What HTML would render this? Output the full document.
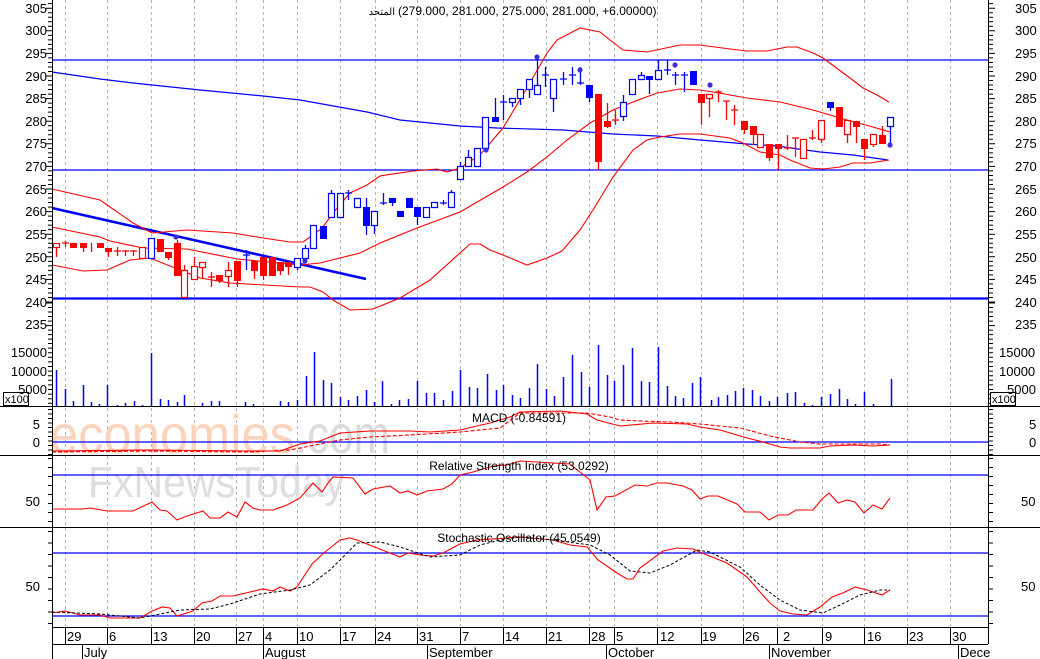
<!DOCTYPE html>
<html><head><meta charset="utf-8"><style>
html,body{margin:0;padding:0;background:#fff;}
svg{display:block;font-family:"Liberation Sans","Noto Sans CJK SC",sans-serif;}
</style></head><body>
<svg width="1040" height="659" viewBox="0 0 1040 659" xmlns="http://www.w3.org/2000/svg">
<rect width="1040" height="659" fill="#fff"/>
<path stroke="#b4b4b4" stroke-dasharray="3,3" fill="none" d="M65.5 0V627M107.5 0V627M151.5 0V627M194.5 0V627M236.5 0V627M263.5 0V627M297.5 0V627M340.5 0V627M375.5 0V627M417.5 0V627M460.5 0V627M503.5 0V627M546.5 0V627M589.5 0V627M614.5 0V627M657.5 0V627M701.5 0V627M743.5 0V627M777.5 0V627M822.5 0V627M864.5 0V627M907.5 0V627M950.5 0V627"/>
<text x="50" y="453" font-size="54" fill="#fcd3bd" textLength="245" lengthAdjust="spacingAndGlyphs">economies</text>
<text x="295" y="453" font-size="54" fill="#dcdcdc" textLength="95" lengthAdjust="spacingAndGlyphs">.com</text>
<text x="88" y="497" font-size="44" fill="#dedede" textLength="257" lengthAdjust="spacingAndGlyphs">FxNewsToday</text>
<g stroke="#0000ff" fill="none">
<line x1="52" y1="60" x2="988" y2="60" stroke-width="1.3"/>
<line x1="52" y1="170" x2="988" y2="170" stroke-width="1.3"/>
<line x1="52" y1="298.5" x2="988" y2="298.5" stroke-width="2.2"/>
<polyline stroke-width="1.2" points="52,72 100,79 133,83 200,90 263,96 300,100 367,112 400,120 460,126 497,128 563,130 613,134 657,136 700,140 747,144 777,146 820,152 853,155 888,160"/>
<line x1="52" y1="208" x2="366" y2="279" stroke-width="2.6"/>
<line x1="52" y1="442" x2="988" y2="442" stroke-width="1.2"/>
<line x1="52" y1="475" x2="988" y2="475" stroke-width="1.2"/>
<line x1="52" y1="553" x2="988" y2="553" stroke-width="1.2"/>
<line x1="52" y1="616" x2="988" y2="616" stroke-width="1.2"/>
</g>
<g stroke="#ff0000" fill="none" stroke-width="1.1">
<polyline points="52,189 100,200 133,223 152,233 187,230 233,233 263,238 290,242 303,242 313,235 323,227 333,213 350,193 367,185 380,176 413,171 437,169 447,172 460,168 480,155 503,128 527,88 547,53 557,40 580,28 600,32 610,40 623,50 647,52 680,45 700,45 730,49 747,51 767,51 787,47 797,47 813,53 823,58 850,78 863,88 877,95 889,102"/>
<polyline points="52,227 100,237 110,241 143,248 187,249 237,259 300,265 320,263 360,253 380,243 417,228 460,212 503,187 527,172 547,157 567,140 590,123 613,110 633,102 657,93 680,89 700,90 713,92 747,98 780,102 813,110 847,120 873,127 890,132"/>
<polyline points="52,265 83,271 107,270 130,260 150,258 175,268 200,278 230,283 300,287 310,287 323,292 333,300 350,310 373,309 400,298 430,280 470,244 480,244 490,250 503,255 527,265 547,258 562,251 580,230 593,210 613,177 633,150 647,140 660,137 680,134 700,134 730,138 743,143 760,152 780,155 790,160 810,168 823,169 840,167 853,163 870,163 889,160"/>
</g>
<path stroke="#ff0000" stroke-width="1.3" fill="none" d="M56.5 243V257M65.5 241V247M73.5 243V247M83.5 243V252M91.5 243V252M108.5 248V257M117.5 247V256M125.5 250V256M133.5 250V256M142.5 247V258M168.5 252V260M177.5 240V275M184.5 265V297M194.5 257V279M202.5 262V278M211.5 272V287M219.5 275V283M228.5 262V287M237.5 261V287M254.5 261V279M263.5 257V280M272.5 257V275M280.5 262V275M288.5 262V275M598.5 94V170M607.5 103V128M615.5 110V125M701.5 94V125M709.5 94V117M718.5 90V102M726.5 101V120M734.5 105V125M744.5 121V134M753.5 126V145M760.5 134V148M769.5 144V161M778.5 144V170M787.5 135V150M795.5 138V157M803.5 139V158M812.5 130V140M821.5 120V143M839.5 107V126M847.5 120V143M856.5 121V143M864.5 139V160M873.5 134V147M882.5 126V143M62 243h7M114 251h7M122 251h7M130 251h7M208 277h7M612 120h7M715 92h7M723 101h7M731 110h7M784 148h7M792 138h7M809 138h7"/>
<path fill="#ff0000" stroke="#ff0000" stroke-width="1" d="M70.5 243.5h6v4h-6zM80.5 243.5h6v4h-6zM97.5 243.5h6v4h-6zM105.5 248.5h6v3h-6zM157.5 239.5h6v12h-6zM165.5 252.5h6v5h-6zM174.5 243.5h6v32h-6zM216.5 275.5h6v5h-6zM234.5 261.5h6v19h-6zM251.5 261.5h6v9h-6zM260.5 257.5h6v18h-6zM269.5 257.5h6v18h-6zM277.5 262.5h6v8h-6zM285.5 262.5h6v4h-6zM595.5 94.5h6v67h-6zM604.5 121.5h6v5h-6zM698.5 94.5h6v8h-6zM741.5 121.5h6v8h-6zM750.5 126.5h6v8h-6zM766.5 144.5h6v13h-6zM775.5 144.5h6v4h-6zM836.5 107.5h6v19h-6zM853.5 121.5h6v5h-6zM861.5 139.5h6v9h-6zM879.5 135.5h6v8h-6z"/>
<path fill="#fff" stroke="#ff0000" stroke-width="1.2" d="M53.5 243.5h6v4h-6zM139.5 247.5h6v11h-6zM181.5 270.5h6v27h-6zM191.5 266.5h6v13h-6zM199.5 262.5h6v5h-6zM225.5 270.5h6v6h-6zM706.5 94.5h6v4h-6zM757.5 134.5h6v13h-6zM800.5 139.5h6v19h-6zM818.5 120.5h6v19h-6zM844.5 120.5h6v14h-6zM870.5 134.5h6v10h-6z"/>
<path stroke="#0000ff" stroke-width="1.3" fill="none" d="M151.5 238V258M246.5 250V270M297.5 258V270M305.5 245V258M313.5 225V248M323.5 226V238M331.5 190V217M340.5 193V217M348.5 190V200M357.5 198V207M366.5 198V235M374.5 211V234M383.5 193V205M392.5 198V206M400.5 211V216M409.5 198V207M417.5 207V225M426.5 207V217M434.5 202V207M443.5 200V205M451.5 190V207M460.5 162V179M468.5 150V166M477.5 148V166M485.5 117V148M495.5 98V122M503.5 95V120M512.5 98V107M520.5 89V105M529.5 79V98M537.5 57V94M545.5 67V87M553.5 79V112M563.5 72V85M572.5 67V85M580.5 67V85M589.5 85V102M623.5 95V121M632.5 79V94M641.5 72V79M649.5 76V94M658.5 60V79M667.5 60V75M675.5 72V85M684.5 72V92M693.5 71V84M830.5 102V111M890.5 117V145M243 255h7M345 193h7M380 203h7M440 203h7M500 102h7M542 75h7M560 79h7M569 75h7M577 83h7M664 70h7M672 75h7M681 75h7"/>
<path fill="#0000ff" stroke="#0000ff" stroke-width="1" d="M320.5 226.5h6v12h-6zM363.5 207.5h6v18h-6zM389.5 198.5h6v4h-6zM397.5 211.5h6v5h-6zM406.5 198.5h6v9h-6zM414.5 207.5h6v9h-6zM492.5 117.5h6v4h-6zM586.5 85.5h6v12h-6zM646.5 76.5h6v3h-6zM690.5 71.5h6v13h-6zM827.5 102.5h6v5h-6z"/>
<path fill="#fff" stroke="#0000ff" stroke-width="1.2" d="M148.5 238.5h6v20h-6zM294.5 258.5h6v9h-6zM302.5 248.5h6v10h-6zM310.5 225.5h6v23h-6zM328.5 193.5h6v24h-6zM337.5 193.5h6v24h-6zM354.5 198.5h6v9h-6zM371.5 211.5h6v14h-6zM423.5 207.5h6v10h-6zM431.5 202.5h6v5h-6zM448.5 192.5h6v15h-6zM457.5 166.5h6v13h-6zM465.5 157.5h6v9h-6zM474.5 148.5h6v18h-6zM482.5 117.5h6v31h-6zM509.5 98.5h6v4h-6zM517.5 89.5h6v9h-6zM526.5 79.5h6v10h-6zM534.5 85.5h6v9h-6zM550.5 79.5h6v19h-6zM620.5 102.5h6v14h-6zM629.5 79.5h6v15h-6zM638.5 75.5h6v4h-6zM655.5 70.5h6v9h-6zM887.5 117.5h6v9h-6z"/>
<g fill="#3a2fd8"><circle cx="176" cy="237" r="2.6"/><circle cx="305" cy="261" r="2.6"/><circle cx="486" cy="150" r="2.6"/><circle cx="537" cy="57" r="2.6"/><circle cx="580" cy="70" r="2.6"/><circle cx="675" cy="65" r="2.6"/><circle cx="710" cy="85" r="2.6"/><circle cx="890" cy="145" r="2.6"/></g>
<path stroke="#0000ff" stroke-width="1.5" fill="none" d="M56.5 370V406M65.5 389V406M73.5 401V406M83.5 385V406M91.5 402V406M99.5 404V406M107.5 385V406M117.5 405V406M125.5 403V406M134.5 401V406M142.5 405V406M151.5 353V406M160.5 399V406M168.5 400V406M177.5 402V406M184.5 395V406M202.5 403V406M211.5 401V406M219.5 401V406M245.5 402V406M253.5 404V406M280.5 401V406M288.5 402V406M297.5 400V406M306.5 376V406M314.5 352V406M323.5 380V406M331.5 383V406M340.5 397V406M348.5 400V406M357.5 396V406M366.5 390V406M374.5 402V406M382.5 381V406M391.5 404V406M399.5 400V406M408.5 399V406M417.5 381V406M426.5 393V406M434.5 393V406M443.5 400V406M452.5 391V406M460.5 370V406M469.5 387V406M477.5 388V406M487.5 374V406M496.5 390V406M503.5 385V406M512.5 395V406M520.5 398V406M529.5 388V406M537.5 364V406M546.5 389V406M554.5 396V406M563.5 377V406M572.5 355V406M581.5 372V406M589.5 387V406M598.5 345V406M607.5 375V406M614.5 381V406M623.5 365V406M632.5 348V406M641.5 381V406M649.5 382V406M658.5 347V406M667.5 386V406M675.5 396V406M683.5 398V406M692.5 383V406M700.5 377V406M711.5 400V406M718.5 397V406M727.5 395V406M735.5 391V406M743.5 388V406M752.5 390V406M760.5 396V406M769.5 401V406M777.5 397V406M787.5 393V406M795.5 392V406M804.5 403V406M812.5 405V406M821.5 397V406M830.5 394V406M839.5 389V406M847.5 399V406M855.5 404V406M864.5 392V406M873.5 404V406M891.5 379V406"/>
<g stroke="#ff0000" fill="none" stroke-width="1.1">
<polyline points="52,451 150,450 250,451 280,451 300,444 320,441 340,433 370,431 410,431 430,432 460,430 490,423 510,417 520,412 560,411 587,414 597,420 620,426 653,423 687,424 700,427 720,430 747,438 763,442 780,447 790,448 820,448 830,446 853,445 873,446 890,445"/>
<polyline stroke-dasharray="4,2" points="52,452 150,451 250,452 290,450 310,446 340,440 370,437 410,435 460,432 500,428 520,413 587,413 610,417 620,420 640,421 670,422 700,424 740,428 770,436 800,442 820,444 880,444 890,445"/>
<polyline points="52,509 67,509 83,509 90,508 107,511 133,511 152,502 160,510 167,511 177,520 187,516 203,511 210,518 220,518 228,512 237,517 245,502 253,508 260,510 273,510 287,505 300,498 313,483 322,492 328,483 333,477 353,478 365,494 373,489 390,486 400,493 408,491 417,495 427,491 443,489 452,484 460,475 473,472 493,466 507,465 520,461 570,464 580,472 590,480 597,510 606,497 615,496 635,485 647,486 657,483 667,483 683,486 692,490 700,499 708,496 718,496 737,504 745,512 760,512 769,520 778,515 788,515 796,510 813,510 822,499 829,493 838,503 847,500 855,502 864,513 873,505 882,509 890,498"/>
<polyline points="52,613 65,611 80,615 100,615 110,618 140,618 152,611 162,607 170,608 177,616 193,611 202,603 212,601 220,596 233,596 250,592 263,589 273,591 280,587 290,591 297,587 312,564 325,552 340,540 350,538 357,540 367,544 377,548 400,557 408,553 420,555 433,556 443,553 460,544 477,540 520,537 553,540 570,545 587,547 598,560 617,573 627,579 633,579 640,568 663,551 677,548 693,549 702,553 727,563 747,577 760,592 770,603 780,611 793,614 807,615 820,607 832,597 843,593 855,587 867,590 882,595 890,590"/>
</g>
<polyline fill="none" stroke="#000" stroke-width="1" stroke-dasharray="3,2" points="52,612 100,614 140,618 160,614 180,610 210,609 230,604 260,594 290,590 310,585 330,570 357,543 380,542 400,547 430,557 460,555 480,545 500,540 520,537 553,540 590,545 610,555 630,571 650,573 670,565 697,550 710,552 740,567 760,585 780,600 800,610 823,613 840,605 860,595 880,590 890,590"/>
<g stroke="#000" stroke-width="1">
<line x1="52.5" y1="0" x2="52.5" y2="659"/>
<line x1="988.5" y1="0" x2="988.5" y2="644"/>
<line x1="0" y1="406.5" x2="1040" y2="406.5"/>
<line x1="0" y1="455.5" x2="1040" y2="455.5"/>
<line x1="0" y1="527.5" x2="1040" y2="527.5"/>
<line x1="52" y1="627.5" x2="988" y2="627.5"/>
<line x1="52" y1="644.5" x2="988" y2="644.5"/>
<path fill="none" d="M82.5 644V659M263.5 644V659M427.5 644V659M606.5 644V659M769.5 644V659M958.5 644V659M65.5 627V644M107.5 627V644M151.5 627V644M194.5 627V644M236.5 627V644M263.5 627V644M297.5 627V644M340.5 627V644M375.5 627V644M417.5 627V644M460.5 627V644M503.5 627V644M546.5 627V644M589.5 627V644M614.5 627V644M657.5 627V644M701.5 627V644M743.5 627V644M777.5 627V644M822.5 627V644M864.5 627V644M907.5 627V644M950.5 627V644"/>
</g>
<g stroke="#000" fill="none">
<line x1="50" y1="302.5" x2="50" y2="0" stroke-width="4" stroke-dasharray="1 3.52"/>
<line x1="50" y1="302.5" x2="50" y2="340" stroke-width="4" stroke-dasharray="1 3.52"/>
<line x1="47" y1="302.5" x2="47" y2="0" stroke-width="2" stroke-dasharray="1 21.6"/>
<line x1="47" y1="302.5" x2="47" y2="340" stroke-width="2" stroke-dasharray="1 21.6"/>
<line x1="991" y1="302.5" x2="991" y2="0" stroke-width="4" stroke-dasharray="1 3.52"/>
<line x1="991" y1="302.5" x2="991" y2="340" stroke-width="4" stroke-dasharray="1 3.52"/>
<line x1="994" y1="302.5" x2="994" y2="0" stroke-width="2" stroke-dasharray="1 21.6"/>
<line x1="994" y1="302.5" x2="994" y2="340" stroke-width="2" stroke-dasharray="1 21.6"/>
<line x1="50" y1="343" x2="50" y2="406" stroke-width="4" stroke-dasharray="1 3.6"/>
<line x1="991" y1="343" x2="991" y2="406" stroke-width="4" stroke-dasharray="1 3.6"/>
<line x1="50" y1="409" x2="50" y2="455" stroke-width="4" stroke-dasharray="1 3.5"/>
<line x1="991" y1="409" x2="991" y2="455" stroke-width="4" stroke-dasharray="1 3.5"/>
<line x1="50" y1="458" x2="50" y2="527" stroke-width="4" stroke-dasharray="1 8"/>
<line x1="991" y1="458" x2="991" y2="527" stroke-width="4" stroke-dasharray="1 8"/>
<line x1="50" y1="531" x2="50" y2="627" stroke-width="4" stroke-dasharray="1 10.5"/>
<line x1="991" y1="531" x2="991" y2="627" stroke-width="4" stroke-dasharray="1 10.5"/>
</g>
<rect x="3.5" y="392.5" width="25" height="13" fill="#fff" stroke="#000"/>
<rect x="990.5" y="392.5" width="25" height="13" fill="#fff" stroke="#000"/>
<g font-size="11" fill="#000"><text x="5" y="403">x100</text><text x="992" y="403">x100</text></g>
<g font-size="12" fill="#000">
<text x="395" y="15" text-anchor="end" font-size="10">المتحد</text>
<text x="398" y="15">(279.000, 281.000, 275.000, 281.000, +6.00000)</text>
</g>
<g font-size="12" fill="#000" text-anchor="middle">
<text x="519" y="422">MACD (-0.84591)</text>
<text x="519" y="470">Relative Strength Index (53.0292)</text>
<text x="519" y="542">Stochastic Oscillator (45.0549)</text>
</g>
<g font-size="13" fill="#000" text-anchor="end">
<text x="47" y="13">305</text><text x="47" y="35">300</text><text x="47" y="58">295</text><text x="47" y="81">290</text><text x="47" y="103">285</text><text x="47" y="126">280</text><text x="47" y="148">275</text><text x="47" y="171">270</text><text x="47" y="194">265</text><text x="47" y="216">260</text><text x="47" y="239">255</text><text x="47" y="262">250</text><text x="47" y="284">245</text><text x="47" y="307">240</text><text x="47" y="329">235</text>
<text x="47" y="357">15000</text><text x="47" y="376">10000</text><text x="47" y="394">5000</text>
<text x="40" y="429">5</text><text x="40" y="447">0</text>
<text x="40" y="506">50</text><text x="40" y="591">50</text>
</g>
<g font-size="13" fill="#000">
<text x="1015" y="13">305</text><text x="1015" y="35">300</text><text x="1015" y="58">295</text><text x="1015" y="81">290</text><text x="1015" y="103">285</text><text x="1015" y="126">280</text><text x="1015" y="148">275</text><text x="1015" y="171">270</text><text x="1015" y="194">265</text><text x="1015" y="216">260</text><text x="1015" y="239">255</text><text x="1015" y="262">250</text><text x="1015" y="284">245</text><text x="1015" y="307">240</text><text x="1015" y="329">235</text>
<text x="999" y="357">15000</text><text x="999" y="376">10000</text><text x="1007" y="394">5000</text>
<text x="1029" y="429">5</text><text x="1029" y="447">0</text>
<text x="1021" y="506">50</text><text x="1021" y="591">50</text>
</g>
<g font-size="13" fill="#000">
<text x="67" y="641">29</text><text x="109" y="641">6</text><text x="153" y="641">13</text><text x="196" y="641">20</text><text x="238" y="641">27</text><text x="265" y="641">4</text><text x="299" y="641">10</text><text x="342" y="641">17</text><text x="377" y="641">24</text><text x="419" y="641">31</text><text x="462" y="641">7</text><text x="505" y="641">14</text><text x="548" y="641">21</text><text x="591" y="641">28</text><text x="616" y="641">5</text><text x="660" y="641">12</text><text x="702" y="641">19</text><text x="745" y="641">26</text><text x="783" y="641">2</text><text x="825" y="641">9</text><text x="867" y="641">16</text><text x="909" y="641">23</text><text x="952" y="641">30</text>
<text x="84" y="657">July</text><text x="265" y="657">August</text><text x="429" y="657">September</text><text x="608" y="657">October</text><text x="771" y="657">November</text><text x="960" y="657">Dece</text>
</g>
</svg>
</body></html>
